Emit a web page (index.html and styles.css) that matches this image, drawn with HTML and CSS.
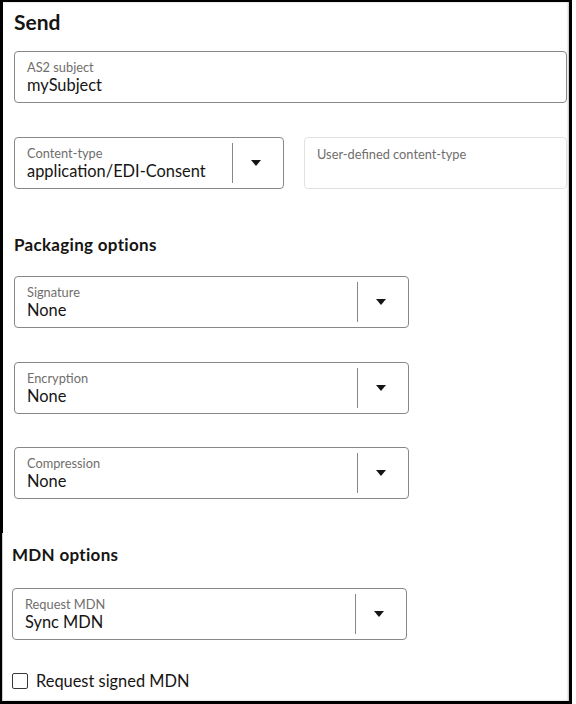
FILE: index.html
```html
<!DOCTYPE html>
<html lang="en">
<head>
    <meta charset="UTF-8" />
    <title>Send</title>
    <link rel="stylesheet" href="styles.css">
</head>
<body>
    <div class="frame">
        <section class="panel panel-top">
            <h2 class="title">Send</h2>

            <div class="field">
                <div class="field-body">
                    <div class="label">AS2 subject</div>
                    <div class="value">mySubject</div>
                </div>
            </div>

            <div class="row">
                <div class="field select content-type">
                    <div class="field-body">
                        <div class="label">Content-type</div>
                        <div class="value">application/EDI-Consent</div>
                    </div>
                    <div class="dropdown">
                        <svg width="10" height="6" viewBox="0 0 10 6"><path d="M0 0h10L5 6z" fill="#161513"/></svg>
                    </div>
                </div>
                <div class="field readonly">
                    <div class="field-body">
                        <div class="label">User-defined content-type</div>
                    </div>
                </div>
            </div>

            <h3 class="group-title packaging">Packaging options</h3>

            <div class="field select narrow">
                <div class="field-body">
                    <div class="label">Signature</div>
                    <div class="value">None</div>
                </div>
                <div class="dropdown">
                    <svg width="10" height="6" viewBox="0 0 10 6"><path d="M0 0h10L5 6z" fill="#161513"/></svg>
                </div>
            </div>

            <div class="field select narrow spaced">
                <div class="field-body">
                    <div class="label">Encryption</div>
                    <div class="value">None</div>
                </div>
                <div class="dropdown">
                    <svg width="10" height="6" viewBox="0 0 10 6"><path d="M0 0h10L5 6z" fill="#161513"/></svg>
                </div>
            </div>

            <div class="field select narrow spaced">
                <div class="field-body">
                    <div class="label">Compression</div>
                    <div class="value">None</div>
                </div>
                <div class="dropdown">
                    <svg width="10" height="6" viewBox="0 0 10 6"><path d="M0 0h10L5 6z" fill="#161513"/></svg>
                </div>
            </div>
        </section>

        <section class="panel panel-bottom">
            <h3 class="group-title mdn">MDN options</h3>

            <div class="field select narrow">
                <div class="field-body">
                    <div class="label">Request MDN</div>
                    <div class="value">Sync MDN</div>
                </div>
                <div class="dropdown">
                    <svg width="10" height="6" viewBox="0 0 10 6"><path d="M0 0h10L5 6z" fill="#161513"/></svg>
                </div>
            </div>

            <label class="checkbox">
                <span class="box"></span>
                <span>Request signed MDN</span>
            </label>
        </section>
    </div>
</body>
</html>
```

FILE: styles.css
```css
body {
    margin: 0;
    background-color: #ffffff;
    font-family: Lato, "Noto Sans", sans-serif;
    color: #161513;
}

.frame {
    width: 572px;
    height: 704px;
    box-sizing: border-box;
    border-top: 2px solid #000;
    border-left: 2px solid #000;
    border-right: 3px solid #000;
    border-bottom: 3px solid #000;
    box-shadow: inset -1px 0 2px rgba(0, 0, 0, 0.25);
    display: flex;
    flex-direction: column;
}

.panel-top {
    border-left: 1px solid #000;
    padding: 0 2px 0 11px;
    height: 531px;
}

.panel-bottom {
    border-left: 1px solid #cfcfcf;
    padding: 0 2px 0 9px;
    flex: 1;
}

.title {
    margin: 8px 0 0;
    font-size: 21px;
    line-height: 24px;
    font-weight: bold;
}

.group-title {
    margin: 0;
    font-size: 17px;
    line-height: 20px;
    letter-spacing: 0.3px;
    font-weight: bold;
}

.packaging {
    margin-top: 46px;
    margin-bottom: 21px;
}

.mdn {
    margin-top: 12px;
    margin-bottom: 23px;
}

/* text inputs and selects share one box */
.field {
    display: flex;
    border: 1px solid #8a8886;
    border-radius: 4px;
    background: #fff;
    margin-top: 17px;
}

.field-body {
    flex: 1;
    padding: 8px 12px 8px;
    min-width: 0;
}

.label {
    font-size: 12.8px;
    line-height: 15px;
    color: #6f6e6c;
}

.value {
    font-size: 16.4px;
    line-height: 19px;
    white-space: nowrap;
}

.row {
    display: flex;
    gap: 20px;
    margin-top: 34px;
}

.row .field {
    margin-top: 0;
}

.content-type {
    width: 270px;
    box-sizing: border-box;
}

.readonly {
    flex: 1;
    border-color: #e2e1df;
    height: 52px;
    box-sizing: border-box;
}

.readonly .field-body {
    padding-top: 9px;
}

.narrow {
    width: 395px;
    box-sizing: border-box;
    margin-top: 0;
}

.spaced {
    margin-top: 33.5px;
}

/* the arrow part of a select */
.dropdown {
    width: 51px;
    margin: 5px 0;
    border-left: 1px solid #8a8886;
    display: flex;
    align-items: center;
    justify-content: center;
    padding-right: 5px;
    box-sizing: border-box;
}

.dropdown svg {
    display: block;
}

.checkbox {
    display: flex;
    align-items: center;
    gap: 8px;
    margin-top: 31px;
    font-size: 16.4px;
    line-height: 20px;
}

.box {
    width: 16px;
    height: 16px;
    box-sizing: border-box;
    border: 1.5px solid #3a3937;
    border-radius: 2px;
}
```
